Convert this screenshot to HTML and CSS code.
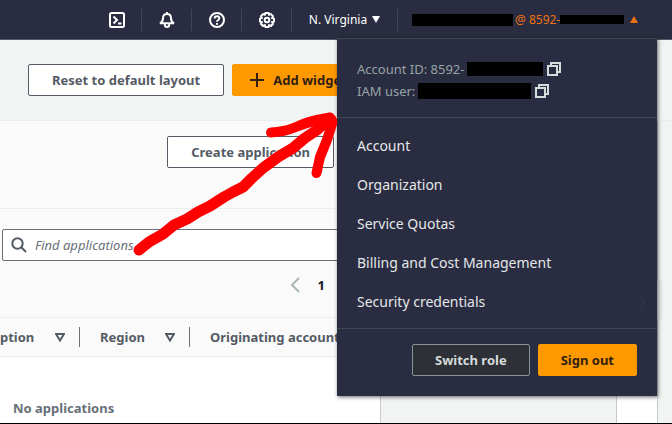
FILE: index.html
```html
<!DOCTYPE html>
<html lang="en">
<head>
<meta charset="utf-8">
<title>Console Home</title>
<link rel="stylesheet" href="styles.css">
</head>
<body>
<header class="topbar">
  <nav class="tools" aria-label="Console tools">
    <button class="tool" aria-label="CloudShell">
      <svg viewBox="0 0 16 16"><rect x="1" y="1" width="14" height="14" rx="1.5"/><path d="M4.500 4.500 8 8l-3.500 3.500M9 11.500h3.500"/></svg>
    </button>
    <button class="tool" aria-label="Notifications">
      <svg viewBox="0 0 16 16"><path d="M1 11.200h14c-2-1-3-2.700-3-5C12 3.500 10.500 2 8 2S4 3.500 4 6.200c0 2.300-1 4-3 5ZM8 2V0M5.800 11.500v1.300c0 1.300.9 2.200 2.200 2.200s2.200-.9 2.200-2.200v-1.300"/></svg>
    </button>
    <button class="tool" aria-label="Help">
      <svg viewBox="0 0 16 16"><circle cx="8" cy="8" r="7"/><path d="M5.700 6.500C5.700 5 6.600 4.200 8 4.200s2.300.8 2.300 2.100C10.300 8 8 8 8 9.800M8 11v1.700"/></svg>
    </button>
    <button class="tool" aria-label="Settings">
      <svg viewBox="0 0 16 16"><path d="M6.500 1h3l.6 1.800 1.800-.7 2 2-.8 1.800 1.900.7v3l-1.900.6.8 1.800-2 2-1.800-.8L9.500 15h-3l-.7-1.800-1.800.8-2-2 .8-1.800L1 9.600v-3l1.800-.7L2 4.100l2-2 1.800.7Z"/><circle cx="8" cy="8" r="2.300"/></svg>
    </button>
  </nav>
  <button class="region">N. Virginia <svg class="caret" viewBox="0 0 8 7"><path d="M0 0h8L4 7Z"/></svg></button>
  <button class="user" aria-expanded="true"><span class="mask mask-user"></span><span class="handle">@ 8592-</span><span class="mask mask-number"></span><svg class="caret" viewBox="0 0 8 7"><path d="M0 7h8L4 0Z"/></svg></button>
</header>

<main class="home">
  <div class="actions">
    <button class="btn">Reset to default layout</button>
    <button class="btn primary add"><svg viewBox="0 0 14 14"><path d="M7 0v14M0 7h14"/></svg>Add widgets</button>
  </div>
  <div class="board">
    <section class="card">
      <div class="card-head"><button class="btn">Create application</button></div>
      <div class="filters">
        <label class="search">
          <svg viewBox="0 0 16 16"><circle cx="6.500" cy="6.500" r="5.200"/><path d="m10.300 10.300 4.700 4.700"/></svg>
          <input type="text" aria-label="Find applications" placeholder="Find applications">
        </label>
        <div class="pager">
          <button class="prev" aria-label="Previous page"><svg viewBox="0 0 10 16"><path d="M9 1 2 8l7 7"/></svg></button>
          <button class="page">1</button>
        </div>
      </div>
      <table class="apps">
        <thead>
          <tr>
            <th class="c-desc"><div class="th">ption<svg viewBox="0 0 10 9"><path d="M1 1h8L5 7.500Z"/></svg></div></th>
            <th class="c-region"><div class="th">Region<svg viewBox="0 0 10 9"><path d="M1 1h8L5 7.500Z"/></svg></div></th>
            <th><div class="th">Originating account</div></th>
          </tr>
        </thead>
        <tbody><tr><td colspan="3">No applications</td></tr></tbody>
      </table>
    </section>
    <div class="next-card"></div>
  </div>
</main>

<div class="drawer-tab"></div>

<aside class="menu">
  <div class="identity">
    <div class="line"><span>Account ID: 8592-</span><span class="mask mask-id"></span><button class="copy" aria-label="Copy account ID"><svg viewBox="0 0 14 14"><path d="M4 4V1h9v9h-3"/><path d="M1 4h9v9H1Z"/></svg></button></div>
    <div class="line"><span>IAM user:</span><span class="mask mask-iam"></span><button class="copy" aria-label="Copy IAM user"><svg viewBox="0 0 14 14"><path d="M4 4V1h9v9h-3"/><path d="M1 4h9v9H1Z"/></svg></button></div>
  </div>
  <nav class="links">
    <a href="#">Account</a>
    <a href="#">Organization</a>
    <a href="#">Service Quotas</a>
    <a href="#">Billing and Cost Management</a>
    <a href="#">Security credentials<svg viewBox="0 0 6 16"><path d="m1 1 4 7-4 7"/></svg></a>
  </nav>
  <div class="session">
    <button class="btn dark">Switch role</button>
    <button class="btn primary">Sign out</button>
  </div>
</aside>

<svg class="arrow" viewBox="130 105 215 160">
  <path class="shaft" d="M139 250 149 242 163 234 174 225 187 219 198 212 210 206 224 197 233 192 243 187 252 178 263 168 278 157 293 148 305 138 317 130 328 120"/>
  <path d="M271 132.500Q284 132 296 127T317 120L330 117.500Q333 120 332 124L327 140 320 157 316.500 173"/>
</svg>
</body>
</html>
```
FILE: styles.css
```css
* {
  box-sizing: border-box;
}

body {
  margin: 0;
  min-height: 100vh;
  display: flex;
  flex-direction: column;
  overflow: hidden;
  border-bottom: 1px solid #000;
  background: #f2f3f3;
  color: #545b64;
  font: 13px/20px "Noto Sans", "Open Sans", sans-serif;
}

button,
input {
  font: inherit;
  color: inherit;
}

button {
  margin: 0;
  padding: 0;
  border: 0;
  background: none;
  white-space: nowrap;
}

svg {
  flex: none;
  fill: none;
  stroke: currentColor;
  stroke-width: 2;
}

.mask {
  flex: none;
  background: #000;
}

/* Top bar */
.topbar {
  display: flex;
  justify-content: flex-end;
  align-items: center;
  height: 40px;
  padding-right: 34px;
  border-bottom: 1px solid #545b64;
  background: #2a2c41;
  color: #fff;
  font-size: 12px;
}

.tools {
  display: flex;
}

.tool {
  display: grid;
  place-items: center;
  width: 50px;
  height: 22px;
  border-right: 1px solid #414750;
}

.tool svg {
  width: 16px;
  height: 16px;
}

.region {
  display: flex;
  align-items: center;
  justify-content: center;
  gap: 5px;
  width: 106px;
  height: 22px;
  border-right: 1px solid #414750;
}

.caret {
  width: 8px;
  height: 7px;
  fill: currentColor;
  stroke: none;
}

.user {
  display: flex;
  align-items: center;
  width: 240px;
  padding-left: 14px;
  color: #ec7211;
}

.user .caret {
  margin-left: auto;
}

.mask-user {
  width: 101px;
  height: 12px;
}

.handle {
  padding-left: 2px;
}

.mask-number {
  width: 64px;
  height: 9px;
}

/* Buttons */
.btn {
  height: 32px;
  padding: 0 23px;
  border: 1px solid #545b64;
  border-radius: 2px;
  background: #fff;
  font-weight: 700;
}

.primary {
  border-color: #ff9900;
  background: #ff9900;
  color: #312111;
}

.dark {
  border-color: #879596;
  background: #2d3036;
  color: #d5dbdb;
}

/* Page */
.home {
  flex: 1;
  display: flex;
  flex-direction: column;
}

.actions {
  display: flex;
  gap: 8px;
  padding: 24px 28px;
  border-bottom: 1px solid #eaeded;
}

.add {
  display: flex;
  align-items: center;
  gap: 9px;
  padding: 0 17px;
}

.add svg {
  width: 14px;
  height: 14px;
}

.board {
  flex: 1;
  display: flex;
  justify-content: space-between;
  padding-right: 14px;
}

.card {
  width: 381px;
  border-right: 1px solid #c5caca;
  background: #fff;
}

.next-card {
  width: 42px;
  border: solid #c5caca;
  border-width: 0 1px;
  background: #fff;
}

.card-head {
  display: flex;
  justify-content: flex-end;
  padding: 15px 46px 40px 0;
  border-bottom: 1px solid #eaeded;
  background: #fafafa;
}

.filters {
  padding: 20px 10px 22px 2px;
  background: #fafafa;
}

.search {
  display: flex;
  align-items: center;
  gap: 8px;
  height: 32px;
  padding-left: 8px;
  border: 1px solid #687078;
  border-radius: 2px;
  background: #fff;
}

.search svg {
  width: 16px;
  height: 16px;
}

.search input {
  flex: 1;
  min-width: 0;
  padding: 0;
  border: 0;
  outline: 0;
  background: none;
}

.search input::placeholder {
  color: #687078;
  font-style: italic;
}

.pager {
  display: flex;
  justify-content: flex-end;
  align-items: center;
  gap: 18px;
  height: 20px;
  margin-top: 14px;
  padding-right: 45px;
}

.prev {
  display: flex;
  color: #aab7b8;
}

.prev svg {
  width: 10px;
  height: 16px;
}

.page {
  color: #16191f;
  font-weight: 700;
}

/* Applications table */
.apps {
  width: 100%;
  table-layout: fixed;
  border-collapse: collapse;
}

.apps th {
  height: 39px;
  padding: 0;
  border: solid #eaeded;
  border-width: 1px 0;
  background: #fafafa;
}

.c-desc {
  width: 80px;
}

.c-region {
  width: 110px;
}

.th {
  display: flex;
  justify-content: space-between;
  align-items: center;
  padding: 0 14px 0 20px;
  border-right: 1px solid #687078;
  white-space: nowrap;
}

.c-desc .th {
  padding-left: 0;
}

.th svg {
  width: 10px;
  height: 9px;
}

.apps td {
  padding: 41px 13px 4px;
  color: #687078;
  font-weight: 700;
}

/* Tab of the collapsed side drawer, tucked under the menu */
.drawer-tab {
  position: absolute;
  top: 280px;
  right: 9px;
  width: 30px;
  height: 40px;
  border-radius: 4px;
  background: #eaebeb;
}

/* Account menu */
.menu {
  position: absolute;
  top: 38px;
  right: 15px;
  width: 320px;
  border-top: 1px solid #414750;
  background: #2a2c41;
  box-shadow: 1px 1px 4px rgba(0, 0, 0, 0.6);
  color: #d5dbdb;
}

.identity {
  padding: 19px 20px 15px;
  border-bottom: 1px solid #414750;
  color: #95a5a6;
}

.line {
  display: flex;
  align-items: center;
  height: 22px;
}

.mask-id {
  width: 76px;
  height: 14px;
  margin-left: 3px;
}

.mask-iam {
  width: 113px;
  height: 16px;
  margin-left: 3px;
}

.copy {
  display: flex;
  margin-left: 4px;
  color: #d5dbdb;
}

.copy svg {
  width: 14px;
  height: 14px;
}

.links {
  padding: 8px 0 7px;
  border-bottom: 1px solid #414750;
  font-size: 14px;
}

.links a {
  display: flex;
  align-items: center;
  justify-content: space-between;
  height: 39px;
  padding: 0 12px 0 20px;
  color: #e4e8e8;
  text-decoration: none;
}

.links svg {
  width: 6px;
  height: 16px;
  color: #343a4c;
  stroke-width: 1;
}

.session {
  display: flex;
  justify-content: flex-end;
  gap: 8px;
  padding: 15px 20px 20px;
}

.session .btn {
  padding: 0 22px;
}

/* Hand-drawn pointer over the page */
.arrow {
  position: absolute;
  top: 105px;
  right: 327px;
  width: 215px;
  height: 160px;
  color: #ff0000;
  stroke-width: 10;
  stroke-linecap: round;
  stroke-linejoin: round;
  pointer-events: none;
}

.shaft {
  stroke-width: 11;
}
```
